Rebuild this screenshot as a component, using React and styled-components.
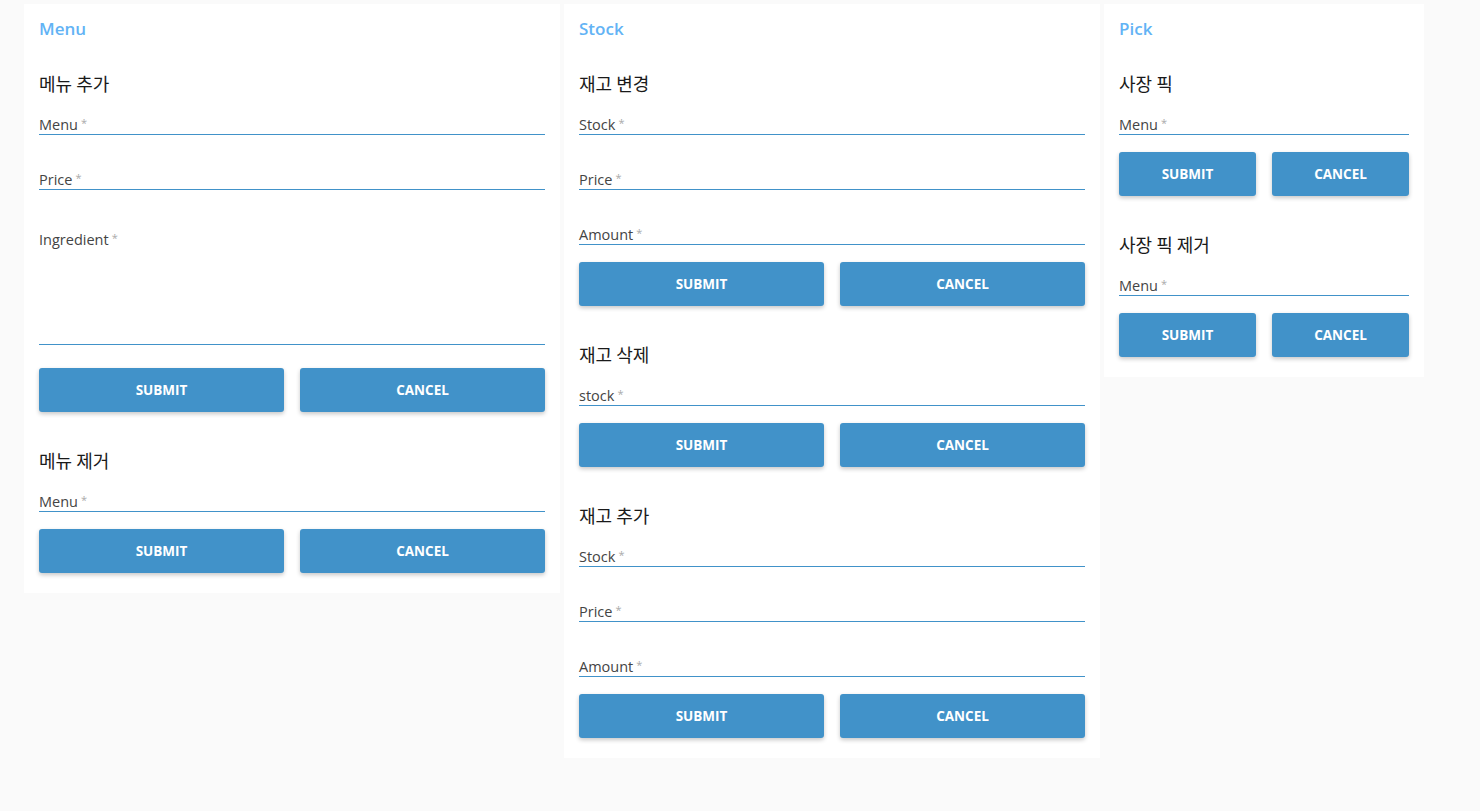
import React from "react";
import styled, { createGlobalStyle } from "styled-components";

const GlobalStyle = createGlobalStyle`
  body {
    margin: 0;
    background: #fafafa;
    font-family: "Open Sans", "Noto Sans CJK KR", sans-serif;
  }
`;

const forms = [
  {
    title: "Menu",
    width: 536,
    sections: [
      {
        heading: "메뉴 추가",
        fields: [
          { label: "Menu" },
          { label: "Price" },
          { label: "Ingredient", multiline: true },
        ],
      },
      { heading: "메뉴 제거", fields: [{ label: "Menu" }] },
    ],
  },
  {
    title: "Stock",
    width: 536,
    sections: [
      {
        heading: "재고 변경",
        fields: [{ label: "Stock" }, { label: "Price" }, { label: "Amount" }],
      },
      { heading: "재고 삭제", fields: [{ label: "stock" }] },
      {
        heading: "재고 추가",
        fields: [{ label: "Stock" }, { label: "Price" }, { label: "Amount" }],
      },
    ],
  },
  {
    title: "Pick",
    width: 320,
    sections: [
      { heading: "사장 픽", fields: [{ label: "Menu" }] },
      { heading: "사장 픽 제거", fields: [{ label: "Menu" }] },
    ],
  },
];

const App = () => {
  return (
    <Page>
      <GlobalStyle />
      {forms.map((form) => (
        <Card key={form.title} $width={form.width}>
          <Title>{form.title}</Title>
          {form.sections.map((section) => (
            <Section key={section.heading}>
              <Heading>{section.heading}</Heading>
              <Fields>
                {section.fields.map((field, i) => (
                  <Field key={i} $multiline={field.multiline}>
                    <Label>
                      {field.label}
                      <Star>*</Star>
                    </Label>
                  </Field>
                ))}
              </Fields>
              <Buttons>
                <Button>Submit</Button>
                <Button>Cancel</Button>
              </Buttons>
            </Section>
          ))}
        </Card>
      ))}
    </Page>
  );
};

export default App;

const Page = styled.div`
  display: flex;
  align-items: flex-start;
  gap: 4px;
  padding: 4px 24px;
`;
const Card = styled.div`
  width: ${(p) => p.$width}px;
  box-sizing: border-box;
  background: #fff;
  padding: 15px 15px 20px;
  display: flex;
  flex-direction: column;
  gap: 36px;
`;
const Title = styled.div`
  color: #62b3f5;
  font-size: 17px;
  font-weight: 600;
  line-height: 20px;
  margin-bottom: -4px;
`;
const Section = styled.div`
  display: flex;
  flex-direction: column;
`;
const Heading = styled.div`
  font-family: "Noto Sans CJK KR", sans-serif;
  color: #1a1a1a;
  font-size: 18px;
  line-height: 24px;
  margin-bottom: 17px;
`;
const Fields = styled.div`
  display: flex;
  flex-direction: column;
  gap: 32px;
`;
const Field = styled.div`
  border-bottom: 1px solid #4192c9;
  height: ${(p) => (p.$multiline ? 118 : 23)}px;
  box-sizing: border-box;
  margin-top: ${(p) => (p.$multiline ? 5 : 0)}px;
  margin-bottom: ${(p) => (p.$multiline ? 6 : 0)}px;
`;
const Label = styled.div`
  color: #444;
  font-size: 14.5px;
  line-height: 21px;
`;
const Star = styled.span`
  color: #aaa;
  font-size: 11px;
  margin-left: 3px;
  vertical-align: 3px;
`;
const Buttons = styled.div`
  display: grid;
  grid-template-columns: 1fr 1fr;
  gap: 16px;
  margin-top: 17px;
`;
const Button = styled.button`
  height: 44px;
  border: none;
  border-radius: 3px;
  background: #4192c9;
  color: #fff;
  font-family: "Open Sans", sans-serif;
  font-size: 13.5px;
  font-weight: 700;
  text-transform: uppercase;
  box-shadow: 0 2px 4px rgba(0, 0, 0, 0.22);
  cursor: pointer;
`;
